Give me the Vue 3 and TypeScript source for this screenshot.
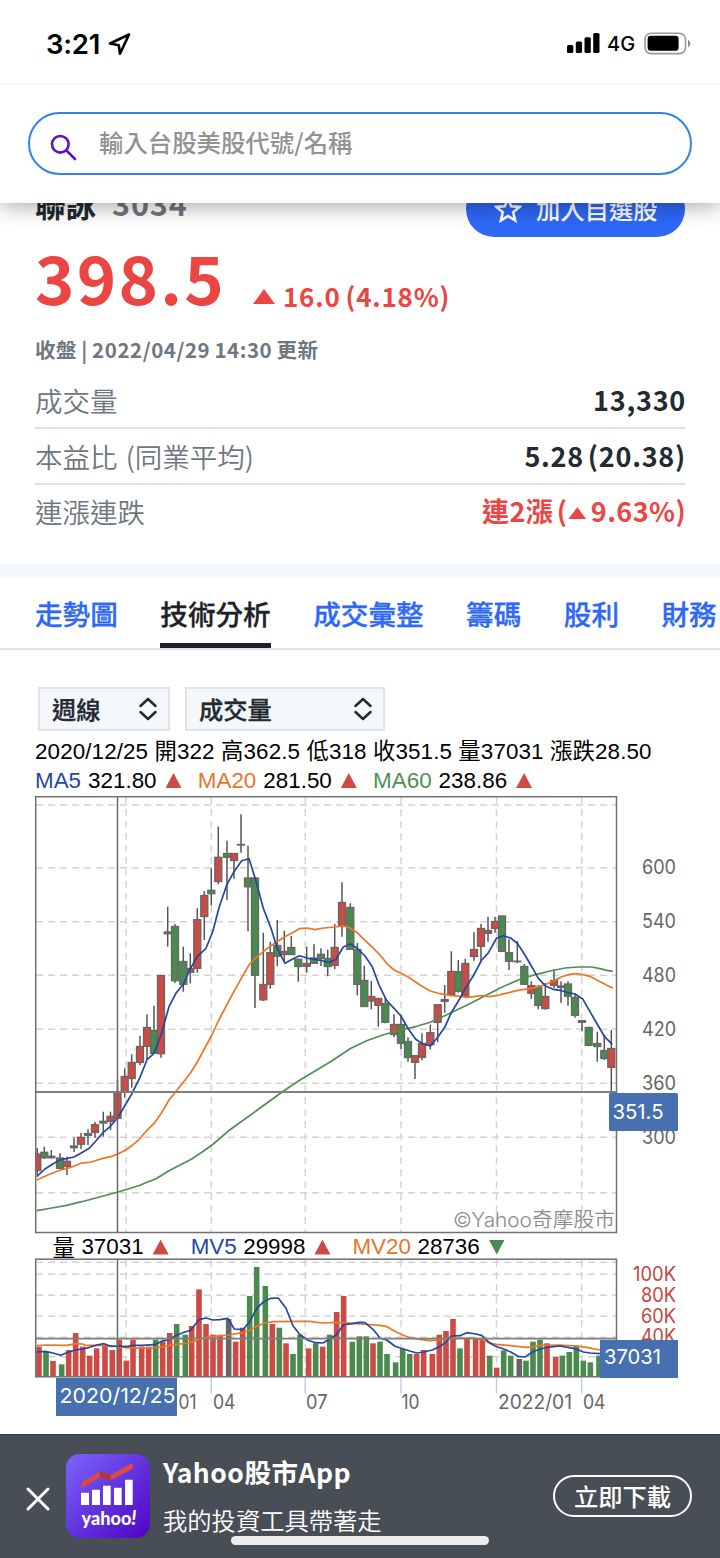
<script setup lang="ts">
type Tone = 'r' | 'g' | 'n'
type Candle = [number, number, number, number, number, Tone]
type Chunk = { x: number; y: number; pts: string }

const tones: Record<Tone, string> = { r: '#cd4b45', g: '#4b8a4e', n: '#666666' }

const rows = [
  { label: '成交量', value: '13,330' },
  { label: '本益比 (同業平均)', value: '5.28 (20.38)' },
]
const tabs = ['走勢圖', '技術分析', '成交彙整', '籌碼', '股利', '財務']

// x, high, open/close top, open/close bottom, low, tone
const candles: Candle[] = [
  [37.3, 1148, 1154, 1170.7, 1175, 'r'], [44.3, 1146.7, 1152.3, 1157.7, 1159, 'g'], [51.3, 1150, 1156.3, 1157.7, 1158.6, 'n'],
  [60, 1153.3, 1158, 1168.3, 1169, 'g'], [67, 1156.7, 1161.3, 1166.5, 1175, 'r'], [74, 1137.7, 1146, 1147.7, 1152, 'n'],
  [81, 1132.7, 1137.3, 1144.3, 1149, 'r'], [88, 1129.3, 1133.7, 1135.3, 1145, 'n'], [95, 1122, 1124.7, 1132.3, 1138, 'r'],
  [103.3, 1111.7, 1121.3, 1123, 1136.7, 'n'], [110.5, 1111.7, 1116.3, 1121.3, 1130, 'r'], [117.5, 1080, 1092.3, 1118.3, 1120, 'r'],
  [124.7, 1068.3, 1076.5, 1092, 1097.5, 'r'], [131.7, 1054.3, 1062.5, 1078.5, 1087.7, 'r'], [140, 1035.7, 1046.5, 1062.5, 1065, 'r'],
  [147, 1014.3, 1027.5, 1046.3, 1059.3, 'r'], [154, 1005.7, 1030.5, 1053.3, 1053.3, 'g'], [161, 975.3, 975.5, 1053.7, 1057.7, 'r'],
  [167.7, 906.7, 932, 933.7, 946.7, 'n'], [175, 924, 926.5, 980.7, 983, 'g'], [183.3, 946.7, 961.5, 984.3, 991.7, 'g'],
  [190.3, 953.3, 968.5, 972.3, 983.3, 'r'], [197.3, 908.3, 919.7, 968.3, 972.7, 'r'], [204.3, 891, 895.5, 916.5, 940, 'r'],
  [211.3, 868.3, 890.3, 893.7, 905.3, 'g'], [218.3, 826.7, 857.3, 881.5, 884.3, 'r'], [227, 840.7, 853.5, 857.3, 900, 'g'],
  [234, 853.3, 853.5, 860.5, 878.7, 'r'], [241, 814.3, 844.5, 845, 852.7, 'n'], [248, 845.7, 878, 886.8, 931.3, 'g'],
  [255, 877.7, 878, 975.3, 1008, 'g'], [263.3, 932.7, 984.5, 999.8, 1001, 'r'], [270.3, 941.7, 952.7, 984.3, 988.7, 'r'],
  [277.3, 920, 945.5, 956.2, 966, 'g'], [284.3, 930.7, 951.5, 954.5, 961, 'r'], [291.3, 936, 947.5, 954.5, 954.7, 'g'],
  [298.3, 958.7, 959.3, 966.5, 981.7, 'g'], [306.7, 946.7, 963.5, 966.3, 972.7, 'r'], [314, 944.3, 958, 963.3, 963.3, 'g'],
  [321, 948.3, 954.3, 958.3, 966, 'g'], [327.7, 949.7, 958.5, 966.5, 976.3, 'g'], [334.7, 924, 947.5, 965.3, 969, 'r'],
  [342, 882.3, 902.5, 926.3, 936.7, 'r'], [350.3, 903.3, 907.5, 949.3, 949.3, 'g'], [357.3, 943, 949.5, 984.3, 995.3, 'g'],
  [364.3, 965.7, 980.5, 1006.5, 1006.7, 'g'], [371.3, 981, 996.5, 1001, 1009.3, 'r'], [378.3, 998.3, 998.5, 1005.3, 1026.7, 'r'],
  [385.3, 997.7, 1003.5, 1022.3, 1023.3, 'g'], [394, 1014.3, 1024.5, 1034.5, 1037.3, 'r'], [401, 1015, 1024.5, 1043.3, 1049, 'g'],
  [408, 1037.3, 1041.5, 1057.5, 1061.7, 'g'], [415, 1055.5, 1055.7, 1062.3, 1079, 'r'], [422, 1033.3, 1043.5, 1057.3, 1060.3, 'r'],
  [430.3, 1024.7, 1032.7, 1044.7, 1049.3, 'r'], [437.7, 1004.3, 1004.7, 1022.3, 1042.3, 'r'], [444.7, 985, 999.7, 1001.3, 1012.7, 'n'],
  [451.3, 951.3, 971.5, 994.5, 994.7, 'r'], [458.3, 960, 971.7, 991.3, 992.7, 'g'], [465.3, 958.7, 963.5, 996.3, 997.7, 'r'],
  [474, 932.3, 949.5, 956.5, 960.7, 'r'], [481, 924, 928.5, 946.3, 961, 'r'], [488, 916.7, 930.5, 933.3, 941.7, 'r'],
  [495, 916.7, 921.5, 928.3, 932.7, 'r'], [502, 915.7, 916, 951.3, 952, 'g'], [509, 939.3, 952.7, 961.3, 970, 'g'],
  [517.3, 941, 961.2, 961.7, 963.3, 'n'], [524.3, 964, 966.5, 984.3, 985, 'g'], [531.3, 981.3, 985.7, 993.3, 999, 'r'],
  [538.3, 985, 987, 1005.3, 1009.3, 'g'], [545.3, 983, 996.5, 1008.5, 1009.7, 'r'], [554, 969.3, 980.5, 985.3, 988, 'r'],
  [561, 981.3, 986, 987.5, 1002.7, 'n'], [568, 981.3, 984, 996.3, 1005.7, 'g'], [575, 993.3, 997.5, 1015.3, 1017.7, 'g'],
  [582, 1020, 1020.7, 1022.3, 1030.7, 'n'], [588.7, 1026.7, 1027.5, 1045.3, 1046.3, 'g'], [597.3, 1031.7, 1043.5, 1046.5, 1061.7, 'g'],
  [604.3, 1034.7, 1050.5, 1058.5, 1060, 'g'], [611.3, 1030, 1048.5, 1067.3, 1091, 'r'],
]

// Series are stored at three units per pixel, each chunk with its own origin.
const ma5: Chunk[] = [
  { x: 30, y: 790, pts: '20,1160 45,1137 68,1122 90,1110 108,1106 132,1101 155,1088 178,1075 198,1052 220,1027 240,1010 262,985 284,948 305,912 330,862 351,809 372,790 393,735 417,650 439,608 460,583 481,536 502,500 528,475 548,425 568,350' },
  { x: 200, y: 790, pts: '81,283 102,245 125,212 147,206 165,263 190,355 213,415 232,475 255,520 274,509 298,497 325,505 363,511 387,518 408,508 430,471 451,462' },
  { x: 350, y: 880, pts: '22,205 45,228 67,260 88,317 110,362 132,385 153,408 175,447 197,478 218,491 241,498 263,472 284,442 304,398 330,355 346,325 372,284 395,240 414,220 440,174 460,167 482,174 502,190 523,222 550,268' },
  { x: 500, y: 880, pts: '115,295 138,319 160,328 185,332 205,338 225,342 249,358 270,395 292,433 313,469 337,493' },
]
const ma20: Chunk[] = [
  { x: 30, y: 790, pts: '20,1170 60,1152 90,1141 120,1133 155,1119 180,1117 215,1106 242,1100 265,1091 287,1080 305,1067 325,1051 351,1021 375,997 397,965 417,930 439,903 460,877 481,850 502,816 523,777 544,738' },
  { x: 200, y: 790, pts: '60,683 102,604 125,563 147,525 165,505 190,485 213,467 253,441 280,427 298,416 320,414 345,419 372,414 405,411 432,407 451,415 472,428 493,449 518,473 540,495 560,520' },
  { x: 350, y: 880, pts: '132,270 153,280 175,291 210,315 241,333 270,341 300,346 330,349 350,352 372,350 395,347 414,350 440,347' },
  { x: 500, y: 880, pts: '0,344 50,332 110,322 135,314 160,303 185,290 205,284 228,281 250,284 270,289 292,301 315,313 338,325' },
]
const ma60: Chunk[] = [
  { x: 30, y: 790, pts: '20,1262 65,1254 110,1246 155,1235 200,1223 262,1207 330,1186 351,1177 378,1166 417,1142 450,1125 485,1107 520,1084 550,1062 600,1019' },
  { x: 200, y: 790, pts: '255,900 300,870 350,840 395,813 450,776' },
  { x: 350, y: 880, pts: '0,506 50,482 100,464 153,450 200,439 241,427 300,400 350,376 400,350 440,329' },
  { x: 500, y: 880, pts: '0,324 60,298 110,283 150,273 195,264 235,261 275,261 300,266 320,271 338,274' },
]
const mv5: Chunk[] = [
  { x: 30, y: 1230, pts: '20,366 45,364 69,369 92,376 116,366 137,360 158,357 179,352 200,345 222,341 242,349 268,348 289,350 309,346 335,346 375,344 398,332 415,330 440,316 462,307 482,301 507,269 528,264 549,270 570,269 593,265 613,297 638,299 659,275 680,235 701,215 722,205 745,204 768,235 789,287 810,314 832,330 857,338 878,339 899,328 918,315 941,284 967,281 988,277' },
  { x: 360, y: 1230, pts: '15,278 39,298 60,324 81,331 105,349 128,356 149,363 170,369 191,366 217,360 238,350 258,337 274,318 300,317 321,308 347,312 365,316 385,335 405,348 431,357 452,366 474,379 495,381 519,365 540,358 561,352 600,348 628,353 649,357 670,366 691,369 720,371' },
]
const mv20: Chunk[] = [
  { x: 30, y: 1230, pts: '20,347 48,345 110,346 140,341 158,342 165,346 215,346 245,348 289,353 350,355 398,351 430,344 470,340 490,335 515,324 550,319 596,315 638,308 659,301 680,289 706,279 730,275 810,274 840,274 875,279 920,277 970,280' },
  { x: 360, y: 1230, pts: '0,282 60,286 81,290 107,305 128,315 149,323 180,328 210,332 238,330 279,324 320,324 347,325 370,330 389,340 410,343 452,347 498,352 519,350 545,346 600,345 649,348 680,352 720,360' },
]
const toPoints = (chunks: Chunk[]): string =>
  chunks
    .flatMap((c) =>
      c.pts.split(' ').map((p) => {
        const [px, py] = p.split(',').map(Number)
        return `${(c.x + px / 3).toFixed(1)},${(c.y + py / 3).toFixed(1)}`
      }),
    )
    .join(' ')

const volumeData =
  '27,350r 48,365g 69,393r 95,403g 116,360r 137,309r 158,350r 179,377r 200,355r 225,345r 247,360r 268,329r 289,392r 309,329r 335,350r 356,350r 377,329g 398,334r 419,309r 440,282g 466,314g 485,288r 507,178r 528,282r 549,314r 570,314r 596,267n 617,335r 638,293r 659,198g 680,111g 706,168g 727,282r 748,293g 768,340r 789,372g 810,314g 836,355r 857,340g 878,350r 899,314g 920,246r 941,198r 967,335g 988,319g 1009,319g ' +
  '1029,340r 1050,335g 1071,372g 1097,397g 1118,357g 1139,372g 1160,372r 1181,360r 1207,372r 1228,314r 1248,303r 1269,267r 1290,355g 1311,325r 1337,325r 1357,325r 1379,377g 1400,413r 1421,361g 1442,377g 1468,387n 1488,392g 1509,335g 1530,329g 1551,340r 1577,381r 1597,377g 1618,366g 1639,346g 1660,392g 1681,397g 1707,377g'
const volumes = volumeData.split(' ').map((s) => {
  const [px, rest] = s.split(',')
  return { x: 30 + Number(px) / 3, y: 1230 + parseInt(rest) / 3, tone: rest.slice(-1) as Tone }
})

const gridX = [126, 211.3, 305.2, 401, 496.5, 581.7]
const gridY = [805, 867.7, 921.7, 975.3, 1029.3, 1083.3, 1137.3, 1192.7]
const volGridY = [1262.3, 1274.3, 1295.3, 1316.3, 1337.3, 1356.7]
const prices = [
  { t: '600', y: 873.8 }, { t: '540', y: 927.7 }, { t: '480', y: 981.7 },
  { t: '420', y: 1035.5 }, { t: '360', y: 1089.5 }, { t: '300', y: 1143.5 },
]
const volLabels = [
  { t: '100K', y: 1280.9, w: 43 }, { t: '80K', y: 1301.7, w: 35 },
  { t: '60K', y: 1322.5, w: 35 }, { t: '40K', y: 1343, w: 35 },
]
const dates = [
  { t: '01', x: 178.5, w: 18 }, { t: '04', x: 213, w: 22.5 }, { t: '07', x: 306, w: 21.5 },
  { t: '10', x: 401.5, w: 18 }, { t: '2022/01', x: 498, w: 74 }, { t: '04', x: 583, w: 22.5 },
]
</script>

<template>
  <main class="screen">
    <header class="top">
      <div class="status">
        <span class="time">3:21</span>
        <svg class="arrow" width="24" height="24" viewBox="0 0 24 24"><path d="M21 2.5 2 11.5l8.800 1.800 1.200 8.400z" fill="none" stroke="#000" stroke-width="2.600" stroke-linejoin="round" /></svg>
        <svg class="signal" width="33" height="21" viewBox="0 0 33 21">
          <rect x="0" y="12" width="6.300" height="8" rx="1.600" /><rect x="8.800" y="8.500" width="6.300" height="11.500" rx="1.600" />
          <rect x="17.500" y="4.200" width="6.300" height="15.800" rx="1.600" /><rect x="26.200" y="0" width="6.300" height="20" rx="1.600" />
        </svg>
        <span class="net">4G</span>
        <svg class="battery" width="48" height="24" viewBox="0 0 48 24">
          <rect x="1" y="1.200" width="40.500" height="20.400" rx="6" fill="none" stroke="#999" stroke-width="1.600" />
          <rect x="3.600" y="3.800" width="31" height="15" rx="3.200" />
          <path d="M44 8v7c3-1.300 3-5.700 0-7z" fill="#888" />
        </svg>
      </div>
      <div class="search-wrap">
        <div class="search">
          <svg width="28" height="28" viewBox="0 0 28 28"><circle cx="10.300" cy="10.300" r="8.300" /><path d="m16.300 16.300 8.700 8.700" /></svg>
          <span>輸入台股美股代號/名稱</span>
        </div>
      </div>
    </header>

    <section class="quote">
      <div class="name-row">
        <span class="name">聯詠</span><span class="code">3034</span>
        <div class="add">
          <svg width="28" height="27" viewBox="0 0 28 27"><path d="m14 2.500 3.200 7.700 8.300.700-6.300 5.400 1.900 8.100L14 20.100l-7.100 4.300 1.900-8.100-6.300-5.400 8.300-.700z" /></svg>
          <span>加入自選股</span>
        </div>
      </div>
      <div class="price-row">
        <span class="price">398.5</span>
        <i class="up big"></i>
        <span class="change">16.0 (4.18%)</span>
      </div>
      <div class="updated">收盤 | 2022/04/29 14:30 更新</div>
      <div v-for="r in rows" :key="r.label" class="row"><span class="label">{{ r.label }}</span><b>{{ r.value }}</b></div>
      <div class="row last"><span class="label">連漲連跌</span><b class="red">連2漲 (<i class="up small"></i> 9.63%)</b></div>
    </section>

    <nav class="tabs">
      <span v-for="(t, i) in tabs" :key="t" :class="{ active: i === 1 }">{{ t }}</span>
    </nav>

    <section class="chart">
      <div class="selects">
        <div class="select narrow"><span>週線</span><svg width="18" height="24" viewBox="0 0 18 24"><path d="m1.500 9 7.500-7 7.500 7M1.500 15l7.500 7 7.500-7" /></svg></div>
        <div class="select wide"><span>成交量</span><svg width="18" height="24" viewBox="0 0 18 24"><path d="m1.500 9 7.500-7 7.500 7M1.500 15l7.500 7 7.500-7" /></svg></div>
      </div>
      <div class="readout ohlc">2020/12/25 開322 高362.5 低318 收351.5 量37031 漲跌28.50</div>
      <div class="readout ma">
        <span class="blue">MA5</span><span class="num">321.80</span><i class="tri"></i>
        <span class="orange">MA20</span><span class="num">281.50</span><i class="tri"></i>
        <span class="green">MA60</span><span class="num">238.86</span><i class="tri"></i>
      </div>

      <svg class="plot" width="720" height="438" viewBox="0 796 720 438">
        <g class="grid">
          <line v-for="y in gridY" :key="y" x1="36" x2="616" :y1="y" :y2="y" />
          <line v-for="x in gridX" :key="x" :x1="x" :x2="x" y1="797" y2="1232" />
        </g>
        <text class="mark" x="453" y="1226.500" textLength="162" lengthAdjust="spacingAndGlyphs">©Yahoo奇摩股市</text>
        <svg x="36" y="796" width="581" height="438" viewBox="36 796 581 438">
          <g v-for="c in candles" :key="c[0]" stroke="#666" stroke-width="1.300">
            <line :x1="c[0]" :x2="c[0]" :y1="c[1]" :y2="c[4]" stroke="#555" stroke-width="1.500" />
            <rect :x="c[0] - 3.500" :y="c[2]" width="7" :height="c[3] - c[2]" :fill="tones[c[5]]" />
          </g>
        </svg>
        <polyline :points="toPoints(ma60)" class="line l-green" />
        <polyline :points="toPoints(ma20)" class="line l-orange" />
        <polyline :points="toPoints(ma5)" class="line l-blue" />
        <rect class="frame" x="35.700" y="796.700" width="580.800" height="435.800" />
        <line class="cross" x1="36" x2="616" y1="1092" y2="1092" />
        <line class="cross thin" x1="117.500" x2="117.500" y1="797" y2="1232" />
        <text v-for="p in prices" :key="p.t" class="axis" x="642" :y="p.y" textLength="34" lengthAdjust="spacingAndGlyphs">{{ p.t }}</text>
        <rect x="609" y="1093" width="69" height="38" rx="1.500" fill="#4670b0" />
        <text class="tip" x="612.500" y="1119" textLength="51" lengthAdjust="spacingAndGlyphs">351.5</text>
      </svg>

      <div class="readout vol">
        <span class="cjk">量</span><span class="num">37031</span><i class="tri"></i>
        <span class="blue">MV5</span><span class="num">29998</span><i class="tri"></i>
        <span class="orange">MV20</span><span class="num">28736</span><i class="tri down"></i>
      </div>

      <svg class="plot" width="720" height="176" viewBox="0 1258 720 176">
        <g class="grid">
          <line v-for="y in volGridY" :key="y" x1="36" x2="616" :y1="y" :y2="y" />
          <line v-for="x in gridX" :key="x" :x1="x" :x2="x" y1="1260" y2="1376" />
        </g>
        <rect v-for="v in volumes" :key="v.x" :x="v.x - 2.800" :y="v.y" width="5.600" :height="1376.500 - v.y" :fill="tones[v.tone]" />
        <polyline :points="toPoints(mv20)" class="line l-orange" />
        <polyline :points="toPoints(mv5)" class="line l-blue" />
        <rect class="frame" x="35.700" y="1259.200" width="580.800" height="117.600" />
        <line class="cross" x1="36" x2="616" y1="1338.700" y2="1338.700" />
        <line class="cross thin" x1="117.500" x2="117.500" y1="1259" y2="1377" />
        <line v-for="x in gridX.slice(1)" :key="x" :x1="x" :x2="x" y1="1378" y2="1393.500" stroke="#b9c9e6" stroke-width="1.300" />
        <text v-for="l in volLabels" :key="l.t" class="axis vol-axis" :x="676 - l.w" :y="l.y" :textLength="l.w" lengthAdjust="spacingAndGlyphs">{{ l.t }}</text>
        <text v-for="d in dates" :key="d.x" class="axis" :x="d.x" y="1409.300" :textLength="d.w" lengthAdjust="spacingAndGlyphs">{{ d.t }}</text>
        <rect x="600" y="1340" width="78" height="38" fill="#4670b0" />
        <text class="tip" x="604" y="1364" textLength="57" lengthAdjust="spacingAndGlyphs">37031</text>
        <rect x="56" y="1378" width="121" height="38" fill="#4670b0" />
        <text class="tip" x="59.500" y="1402.500" textLength="116" lengthAdjust="spacingAndGlyphs">2020/12/25</text>
      </svg>
    </section>

    <footer class="banner">
      <svg class="close" width="26" height="26" viewBox="0 0 26 26"><path d="m3 3 20 20M23 3 3 23" /></svg>
      <svg class="app" width="84" height="84" viewBox="0 0 84 84">
        <defs><linearGradient id="app-bg" x1="0" y1="0" x2="1" y2="1"><stop offset="0" stop-color="#7d64fb" /><stop offset=".5" stop-color="#6334df" /><stop offset="1" stop-color="#5003c4" /></linearGradient></defs>
        <rect width="84" height="84" rx="14" fill="url(#app-bg)" />
        <path d="M15.700 28.300 33.300 17.700 45 20.700 66.700 8.700v6L45 26l-11.700-3-17.600 11z" fill="#e0493f" />
        <path d="m33.300 17.700 11.700 3V26l-11.700-3z" fill="#b8352f" />
        <path d="M15 38.700h8V51h-8zM26 35.700h8V51h-8zM37 31.700h7.700V51H37zM48 33.700h7.700V51H48zM59 25.700h7.700V51H59z" fill="#fff" />
        <text x="15.500" y="71" textLength="55" lengthAdjust="spacingAndGlyphs" class="brand">yahoo<tspan class="bang">!</tspan></text>
      </svg>
      <div class="copy"><strong>Yahoo股市App</strong><span>我的投資工具帶著走</span></div>
      <div class="download">立即下載</div>
      <div class="home"></div>
    </footer>
  </main>
</template>

<style>
body { margin: 0; background: #fff; }
</style>

<style scoped>
.screen { width: 720px; height: 1558px; overflow: hidden; background: #fff; font-family: "Noto Sans CJK TC", sans-serif; color: #232a31; display: flex; flex-direction: column; white-space: nowrap; }
.screen * { box-sizing: border-box; }
.top { position: relative; z-index: 2; height: 203px; flex: none; background: #fff; box-shadow: 0 2px 22px rgba(0, 0, 0, .38); }
.status { height: 84px; border-bottom: 1px solid #f3f3f3; display: flex; align-items: center; padding: 4px 28px 0 46px; color: #000; }
.time { font: 600 27.500px Inter, sans-serif; width: 62px; letter-spacing: -.2px; }
.arrow { margin-right: auto; }
.signal { margin-right: 7px; }
.net { font: 500 20px Inter, sans-serif; width: 30px; margin-right: 7px; }
.search-wrap { padding: 28px; }
.search { height: 63px; border: 2px solid #3581ea; border-radius: 32px; display: flex; align-items: center; padding-left: 19.500px; }
.search svg { fill: none; stroke: #5a0fc8; stroke-width: 2.600; stroke-linecap: round; margin-top: 9px; margin-right: 21.500px; }
.search span { font-size: 24.400px; color: #929292; font-weight: 500; line-height: 40px; margin-top: -3px; }
.quote { height: 361px; flex: none; padding: 0 35px; }
.name-row { display: flex; align-items: center; height: 56px; margin-top: -22px; }
.name { font-size: 30.500px; font-weight: 700; line-height: 40px; margin-top: -11px; }
.code { font-size: 30.500px; font-weight: 700; line-height: 40px; letter-spacing: .9px; color: #6e7780; margin: -12px auto 0 16px; }
.add { width: 219px; height: 56px; border-radius: 28px; background: #2e68f7; color: #fff; display: flex; align-items: center; padding-left: 28px; font-size: 24.300px; font-weight: 500; }
.add span { margin-top: -2px; }
.add svg { fill: none; stroke: #fff; stroke-width: 2.600; margin-right: 14px; }
.price-row { height: 94px; display: flex; align-items: flex-start; color: #eb4643; font-weight: 700; }
.price { font-size: 67px; line-height: 90px; letter-spacing: 2.200px; width: 218px; margin-top: -6px; }
.change { font-size: 26px; line-height: 40px; margin-top: 39px; letter-spacing: .75px; word-spacing: -1.500px; }
.up { display: inline-block; background: #eb4643; clip-path: polygon(50% 0, 100% 100%, 0 100%); }
.big { width: 22px; height: 15px; margin: 52px 8px 0 0; }
.small { width: 18px; height: 12px; margin: 0 1px 3px; vertical-align: middle; }
.updated { height: 44px; line-height: 41px; font-size: 20.500px; font-weight: 700; color: #6e7780; margin-top: -2px; letter-spacing: .55px; word-spacing: -1px; }
.row { height: 56px; display: flex; align-items: center; justify-content: space-between; border-bottom: 2px solid #e0e4e9; font-size: 27.500px; line-height: 40px; }
.row.last { border: 0; margin-top: -2px; }
.row b { font-size: 27px; letter-spacing: .75px; word-spacing: -3px; margin-right: -1px; }
.row .red { color: #eb4643; letter-spacing: .4px; }
.label { color: #6e7780; font-weight: 350; }
.label { word-spacing: 2px; }
.tabs { height: 86px; flex: none; border-top: 14px solid #f5f8fa; border-bottom: 2px solid #e0e4e9; display: flex; gap: 42.500px; padding-left: 35px; overflow: hidden; }
.tabs span { font-size: 27.600px; font-weight: 500; line-height: 70px; color: #2e68f7; flex: none; -webkit-text-stroke: .3px currentColor; }
.tabs .active { color: #1d2228; border-bottom: 5px solid #1d2228; }
.chart { height: 784px; flex: none; }
.selects { padding: 37px 0 0 38px; display: flex; gap: 15px; }
.select { height: 44px; background: #f5f8fa; border: 2px solid #e0e4e9; display: flex; align-items: center; justify-content: space-between; padding: 0 11px 0 12px; font-size: 24.300px; font-weight: 500; line-height: 40px; -webkit-text-stroke: .3px currentColor; }
.select svg { fill: none; stroke: #232a31; stroke-width: 2.500; stroke-linejoin: round; stroke-linecap: round; }
.narrow { width: 132px; }
.wide { width: 200px; }
.readout { font-family: "Liberation Sans", "Noto Sans CJK TC", sans-serif; font-size: 22.400px; color: #000; padding-left: 35px; display: flex; align-items: center; }
.ohlc { height: 35px; letter-spacing: .11px; padding-top: 1px; }
.ma { height: 30px; padding-bottom: 1px; }
.num { margin-left: 7px; margin-right: 9px; }
.tri { width: 16px; height: 15px; background: #cd4b45; clip-path: polygon(50% 0, 100% 100%, 0 100%); margin-right: 16.300px; }
.down { background: #4b8a4e; clip-path: polygon(0 0, 100% 0, 50% 100%); }
.vol { height: 24px; padding-left: 52.500px; padding-top: 2px; }
.vol .num { margin-left: 6.500px; }
.vol .tri { margin-right: 22px; }
.cjk { margin-top: -3px; }
.blue { color: #2447a0; }
.orange { color: #e6762b; }
.green { color: #4f9052; }
.plot { display: block; }
.grid line { stroke: #d3d3d3; stroke-width: 1.400; stroke-dasharray: 7.200 4.800; }
.line { fill: none; stroke-width: 1.700; stroke-linejoin: round; }
.l-blue { stroke: #2447a0; }
.l-orange { stroke: #ec7526; }
.l-green { stroke: #4f9052; }
.frame { fill: none; stroke: #707070; stroke-width: 1.500; }
.cross { stroke: #7d7f7c; stroke-width: 1.800; }
.thin { stroke: #696969; stroke-width: 1.500; }
.axis { font: 400 20px Inter, sans-serif; fill: #666; }
.vol-axis { fill: #c74541; font-size: 19.500px; }
.tip { font: 400 20.500px Inter, sans-serif; fill: #fff; }
.mark { font: 350 20px Inter, "Noto Sans CJK TC", sans-serif; fill: #8b8b8b; }
.banner { position: relative; height: 124px; flex: none; background: #484e56; border-top: 1px solid #383e46; color: #fff; display: flex; align-items: center; padding: 0 28px 2px 25px; }
.close { fill: none; stroke: #fff; stroke-width: 3; stroke-linecap: round; margin: 6px 15px 0 0; }
.brand { font: 900 19px Lato, sans-serif; fill: #fff; }
.bang { font-style: italic; font-size: 20px; }
.copy { margin-left: 13px; margin-right: auto; align-self: flex-start; }
.copy strong, .copy span { display: block; }
.copy strong { font-size: 26.500px; line-height: 40px; margin-top: 17px; font-weight: 700; letter-spacing: .5px; }
.copy span { font-size: 24.300px; font-weight: 350; line-height: 40px; margin-top: 8px; }
.download { width: 139px; height: 42px; border: 2px solid #fff; border-radius: 21px; text-align: center; font-size: 24.300px; line-height: 37px; font-weight: 500; }
.home { position: absolute; left: 231px; top: 101px; width: 258px; height: 9px; border-radius: 5px; background: #eee; }
</style>
